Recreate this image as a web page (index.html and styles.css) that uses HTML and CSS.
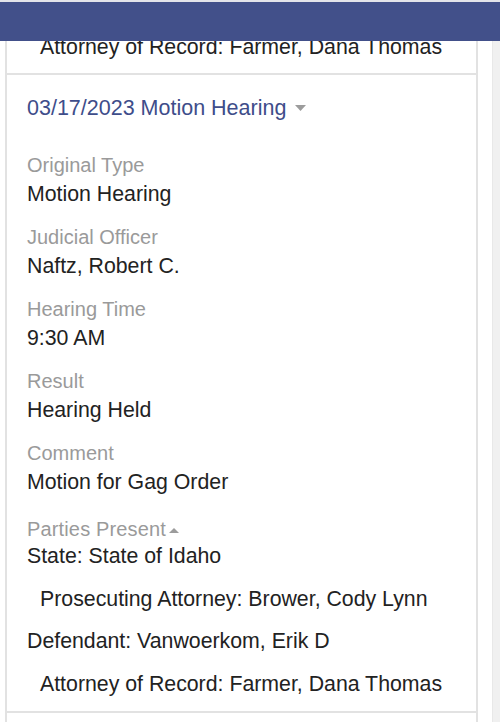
FILE: index.html
```html
<!DOCTYPE html>
<html lang="en">
<head>
<meta charset="utf-8">
<title>Case Events</title>
<link rel="stylesheet" href="styles.css">
</head>
<body>
<header class="topbar"></header>
<div class="page">
  <main class="panel">
    <section class="event event-cut">
      <p class="party party-sub">Attorney of Record: Farmer, Dana Thomas</p>
    </section>
    <section class="event">
      <h2 class="event-title">03/17/2023 Motion Hearing<svg class="caret caret-down" width="11" height="6" viewBox="0 0 11 6"><path d="M0 0H11L5.5 6Z"/></svg></h2>
      <div class="fields">
        <div class="field">
          <div class="label">Original Type</div>
          <div class="value">Motion Hearing</div>
        </div>
        <div class="field">
          <div class="label">Judicial Officer</div>
          <div class="value">Naftz, Robert C.</div>
        </div>
        <div class="field">
          <div class="label">Hearing Time</div>
          <div class="value">9:30 AM</div>
        </div>
        <div class="field">
          <div class="label">Result</div>
          <div class="value">Hearing Held</div>
        </div>
        <div class="field">
          <div class="label">Comment</div>
          <div class="value">Motion for Gag Order</div>
        </div>
        <div class="field field-parties">
          <div class="label label-parties">Parties Present<svg class="caret caret-up" width="10" height="5" viewBox="0 0 10 5"><path d="M0 5H10L5 0Z"/></svg></div>
          <div class="parties">
            <p class="party">State: State of Idaho</p>
            <p class="party party-sub">Prosecuting Attorney: Brower, Cody Lynn</p>
            <p class="party">Defendant: Vanwoerkom, Erik D</p>
            <p class="party party-sub">Attorney of Record: Farmer, Dana Thomas</p>
          </div>
        </div>
      </div>
    </section>
    <section class="event event-next"></section>
  </main>
  <aside class="rail"></aside>
</div>
</body>
</html>
```
FILE: styles.css
```css
* { box-sizing: border-box; }

html, body {
  margin: 0;
  padding: 0;
  background: #ffffff;
}

body {
  font-family: "Liberation Sans", Arial, Helvetica, sans-serif;
  color: #222222;
  width: 500px;
  height: 722px;
  overflow: hidden;
}

.topbar {
  position: fixed;
  top: 0;
  left: 0;
  right: 0;
  height: 41px;
  border-top: 2px solid #e3e4ea;
  background: #42508a;
  z-index: 10;
}

.page {
  display: flex;
  align-items: stretch;
  min-height: 722px;
}

.panel {
  margin-left: 5px;
  width: 473px;
  border-left: 2px solid #e2e2e2;
  border-right: 2px solid #e2e2e2;
  min-height: 722px;
}

.rail {
  margin-left: 14px;
  width: 8px;
  background: #f0f0f0;
  border-left: 1px solid #e8e8e8;
}

.event {
  padding: 18px 0 12.5px 20px;
  border-top: 2px solid #e2e2e2;
}

.event-cut {
  border-top: none;
  padding-top: 31.5px;
  padding-bottom: 11.5px;
}

.event-next {
  min-height: 20px;
}

.event-title {
  margin: 0;
  font-size: 21.5px;
  font-weight: normal;
  line-height: 30px;
  color: #3e4d8a;
}

.caret {
  fill: #9c9c9c;
}

.caret-down {
  margin-left: 9px;
  vertical-align: 4px;
}

.caret-up {
  margin-left: 3px;
  vertical-align: 3px;
}

.fields {
  margin-top: 30px;
  display: flex;
  flex-direction: column;
  gap: 14px;
}

.label {
  font-size: 20px;
  line-height: 24px;
  color: #9a9a9a;
}

.label-parties {
  letter-spacing: 0.15px;
}

.value {
  font-size: 21.3px;
  line-height: 34px;
  color: #222222;
}

.field-parties {
  margin-top: 4px;
}

.parties {
  display: flex;
  flex-direction: column;
  gap: 12.5px;
}

.party {
  margin: 0;
  font-size: 21.3px;
  line-height: 30px;
  color: #222222;
  white-space: nowrap;
}

.party-sub {
  padding-left: 13px;
}
```
